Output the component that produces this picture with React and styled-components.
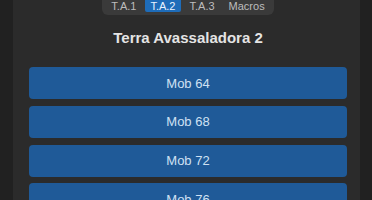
import React, { useState } from "react";
import styled, { createGlobalStyle } from "styled-components";

const GlobalStyle = createGlobalStyle`
body {
  margin: 0;
  background-color: #212121;
  font-family: "Liberation Sans", Arial, sans-serif;
  overflow: hidden;
}
`

const Panel = styled.main`
margin: 0 12px 0 13px;
min-height: 200px;
background-color: #2b2b2b;
padding: 0 13px 0 16px;
display: flex;
flex-direction: column;
align-items: center;
`

const Tabs = styled.nav`
margin-top: -6px;
display: flex;
gap: 4px;
padding: 3px 4px 2.5px;
background-color: #3a3a3a;
border-radius: 0 0 6px 6px;
`

const Tab = styled.button`
border: none;
font-family: inherit;
font-size: 11px;
padding: 3px 5px 0;
line-height: normal;
border-radius: 2px;
cursor: pointer;
color: ${(p) => (p.$active ? "#e8f2ff" : "#bdbdbd")};
background-color: ${(p) => (p.$active ? "#1e6cb9" : "transparent")};
`

const Title = styled.h2`
margin: 14.4px 0 21.4px;
font-size: 15px;
font-weight: bold;
color: #e4e4e4;
`

const List = styled.div`
align-self: stretch;
display: flex;
flex-direction: column;
gap: 6.7px;
`

const MobButton = styled.button`
height: 32px;
border: none;
border-radius: 4px;
background-color: #1f5a98;
color: #cfe1f3;
font-family: inherit;
font-size: 13px;
cursor: pointer;
&:hover {
  background-color: #2466aa;
}
`

const tabs = ["T.A.1", "T.A.2", "T.A.3", "Macros"]
const mobs = [64, 68, 72, 76, 80]

function App() {
  const [ativo, setAtivo] = useState("T.A.2")

  return (
    <Panel>
      <GlobalStyle />
      <Tabs>
        {tabs.map((t) => (
          <Tab key={t} $active={t === ativo} onClick={() => setAtivo(t)}>{t}</Tab>
        ))}
      </Tabs>
      <Title>Terra Avassaladora 2</Title>
      <List>
        {mobs.map((m) => (
          <MobButton key={m}>Mob {m}</MobButton>
        ))}
      </List>
    </Panel>
  )
}

export default App
